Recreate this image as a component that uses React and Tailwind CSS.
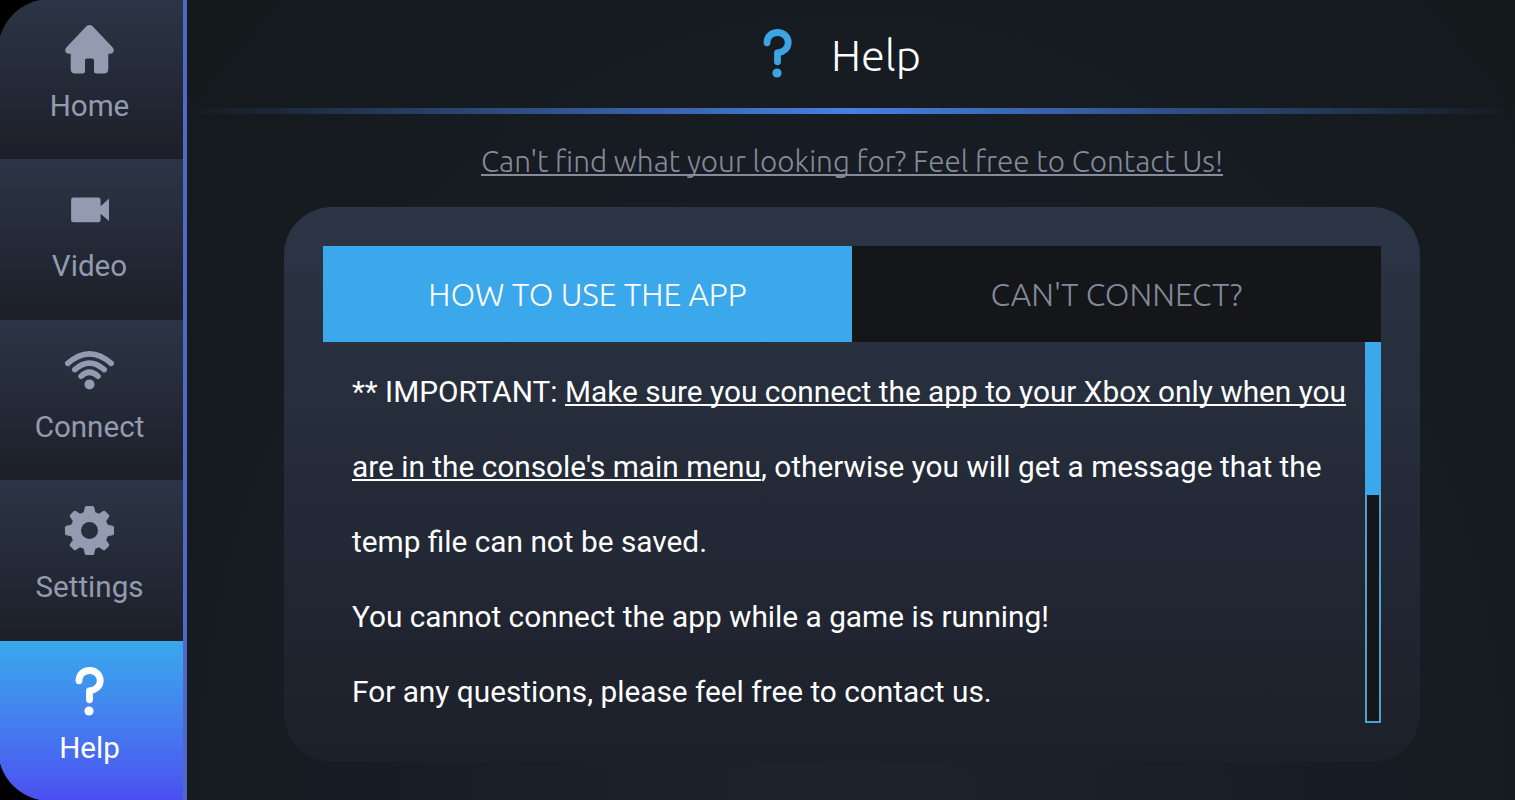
/**
 * App.jsx - Help screen of the streaming app
 */

import React, { useState } from 'react';
import clsx from 'clsx';

const HomeIcon = () => (
  <svg className="h-[49px] w-[49px]" viewBox="0 0 49 49" fill="currentColor">
    <path d="M21.4 1.3Q24.5-1.2 27.6 1.3L47.5 22.2C50.2 25.2 48.4 28.8 45 28.8H43.3V44.3Q43.3 48.5 39 48.5H31.5Q29 48.5 29 46V35.3Q29 33.4 27 33.4H22Q20 33.4 20 35.3V46Q20 48.5 17.5 48.5H10Q5.7 48.5 5.7 44.3V28.8H4C.6 28.8-1.2 25.2 1.5 22.2Z" />
  </svg>
);

const VideoIcon = () => (
  <svg className="h-[49px] w-[49px]" viewBox="0 0 49 49" fill="currentColor">
    <path d="M8.4 12.6H33.3Q35.6 12.6 35.6 14.9V21.2L44 13.6V36L35.6 28.8V35Q35.6 37.3 33.3 37.3H8.4Q6.1 37.3 6.1 35V14.9Q6.1 12.6 8.4 12.6Z" />
  </svg>
);

const WifiIcon = () => (
  <svg className="h-[49px] w-[49px]" viewBox="0 0 49 49" fill="none" stroke="currentColor" strokeWidth="5.6" strokeLinecap="round">
    <path d="M2.8 17.4Q24.5-1.6 46.2 17.4" />
    <path d="M9.8 23.6Q24.5 10.8 39.2 23.6" />
    <path d="M16 30.2Q24.5 22.4 33 30.2" />
    <circle cx="24.5" cy="38.4" r="5" fill="currentColor" stroke="none" />
  </svg>
);

const GearIcon = () => (
  <svg className="h-[49px] w-[49px]" viewBox="0 0 49 49" fill="currentColor">
    <path
      fillRule="evenodd"
      d="M21.5 0H27.5Q29 0 29.3 1.5L30.3 6.2L34 7.8L38.1 5.1Q39.4 4.3 40.5 5.4L43.8 8.7Q44.8 9.8 44 11L41.2 15L42.8 18.7L47.5 19.7Q49 20 49 21.5V27.5Q49 29 47.5 29.3L42.8 30.3L41.2 34L43.9 38.1Q44.7 39.4 43.6 40.5L40.3 43.8Q39.2 44.8 38 44L34 41.2L30.3 42.8L29.3 47.5Q29 49 27.5 49H21.5Q20 49 19.7 47.5L18.7 42.8L15 41.2L10.9 43.9Q9.6 44.7 8.5 43.6L5.2 40.3Q4.2 39.2 5 38L7.8 34L6.2 30.3L1.5 29.3Q0 29 0 27.5V21.5Q0 20 1.5 19.7L6.2 18.7L7.8 15L5.1 10.9Q4.3 9.6 5.4 8.5L8.7 5.2Q9.8 4.2 11 5L15 7.8L18.7 6.2L19.7 1.5Q20 0 21.5 0ZM24.5 16A8.5 8.5 0 1 0 24.5 33A8.5 8.5 0 1 0 24.5 16Z"
    />
  </svg>
);

const QuestionIcon = () => (
  <svg className="h-[49px] w-[49px]" viewBox="0 0 49 49" fill="none" stroke="currentColor" strokeWidth="6.8" strokeLinecap="round" strokeLinejoin="round">
    <path d="M14 13.8C14 7.6 18.6 3.5 24.6 3.5C30.8 3.5 35.2 8 35.2 13.4C35.2 19.2 30.6 23 24.5 23.8V32.8" />
    <circle cx="24" cy="44" r="4.6" fill="currentColor" stroke="none" />
  </svg>
);

const MENU = [
  { id: 'home', label: 'Home', Icon: HomeIcon },
  { id: 'video', label: 'Video', Icon: VideoIcon },
  { id: 'connect', label: 'Connect', Icon: WifiIcon },
  { id: 'settings', label: 'Settings', Icon: GearIcon },
  { id: 'help', label: 'Help', Icon: QuestionIcon },
];

const Sidebar = ({ current }) => (
  <nav className="flex h-full w-[187px] shrink-0 flex-col justify-center overflow-hidden border-r-4 border-[#5069c9] bg-black">
    <div className="-ml-0.5 shrink-0 overflow-hidden rounded-l-[52px]">
      {MENU.map(({ id, label, Icon }) => (
        <button
          key={id}
          className={clsx(
            'flex h-[160.4px] w-full flex-col items-center bg-linear-to-b pt-[26px] pr-1 pl-0.5',
            id === current
              ? 'from-[#3aa8ec] to-[#4b4df0] text-white'
              : 'from-[#2c3546] to-[#1c1f29] text-[#929bb0]'
          )}
        >
          <Icon />
          <span className="mt-3.5 text-[29.6px] leading-9">{label}</span>
        </button>
      ))}
    </div>
  </nav>
);

const TabButton = ({ active, children, onClick }) => (
  <button
    onClick={onClick}
    className={clsx(
      "flex-1 font-['Ubuntu','Open_Sans',sans-serif] text-[32px] font-light",
      active ? 'bg-[#3aa8ea] text-white' : 'bg-[#15161a] text-[#858999]'
    )}
  >
    {children}
  </button>
);

export default function App() {
  const [tab, setTab] = useState('how');

  return (
    <div className="flex h-screen w-full overflow-hidden bg-[#161b21] font-['Roboto',sans-serif]">
      <Sidebar current="help" />

      <main className="flex min-w-0 flex-1 flex-col bg-[radial-gradient(ellipse_at_50%_100%,#1d222d_0%,#181d25_50%,#14191c_100%)]">
        <header className="flex h-[107.5px] items-center justify-center gap-[29px] pr-[28px]">
          <div className="-mt-px text-[#3ca5e2]">
            <QuestionIcon />
          </div>
          <h1 className="mt-0.5 font-['Ubuntu','Open_Sans',sans-serif] text-[43.5px] leading-none font-light text-white">
            Help
          </h1>
        </header>
        <div className="h-1.5 shrink-0 bg-linear-to-r from-transparent via-[#4680e2] to-transparent" />

        <div className="flex h-[93px] shrink-0 items-center justify-center pt-1 pl-0.5">
          <a
            href="#contact"
            className="font-['Ubuntu','Open_Sans',sans-serif] text-[29.7px] leading-none font-light whitespace-nowrap text-[#858b9a] underline decoration-[1.5px] underline-offset-2 [text-decoration-skip-ink:none]"
          >
            Can't find what your looking for? Feel free to Contact Us!
          </a>
        </div>

        <section className="ml-[97px] h-[555px] w-[1136px] shrink-0 rounded-[48px] bg-linear-to-b from-[#2c3546] to-[#1c202a] px-[39px] pt-[39px]">
          <div className="flex h-24">
            <TabButton active={tab === 'how'} onClick={() => setTab('how')}>
              HOW TO USE THE APP
            </TabButton>
            <TabButton active={tab === 'connect'} onClick={() => setTab('connect')}>
              CAN'T CONNECT?
            </TabButton>
          </div>

          <div className="flex h-[381px] justify-between">
            <div className="pt-3 pl-[29px] text-[29.8px] leading-[75px] whitespace-nowrap text-white">
              <p>
                ** IMPORTANT:{' '}
                <span className="underline decoration-2 underline-offset-2 [text-decoration-skip-ink:none]">
                  Make sure you connect the app to your Xbox only when you
                  <br />
                  are in the console's main menu
                </span>
                , otherwise you will get a message that the
                <br />
                temp file can not be saved.
              </p>
              <p>You cannot connect the app while a game is running!</p>
              <p>For any questions, please feel free to contact us.</p>
            </div>

            <div className="h-full w-4 shrink-0 border-2 border-[#519fcb] bg-[#15161a]">
              <div className="-mx-0.5 -mt-0.5 h-[153px] bg-[#3aa8ea]" />
            </div>
          </div>
        </section>
      </main>
    </div>
  );
}
